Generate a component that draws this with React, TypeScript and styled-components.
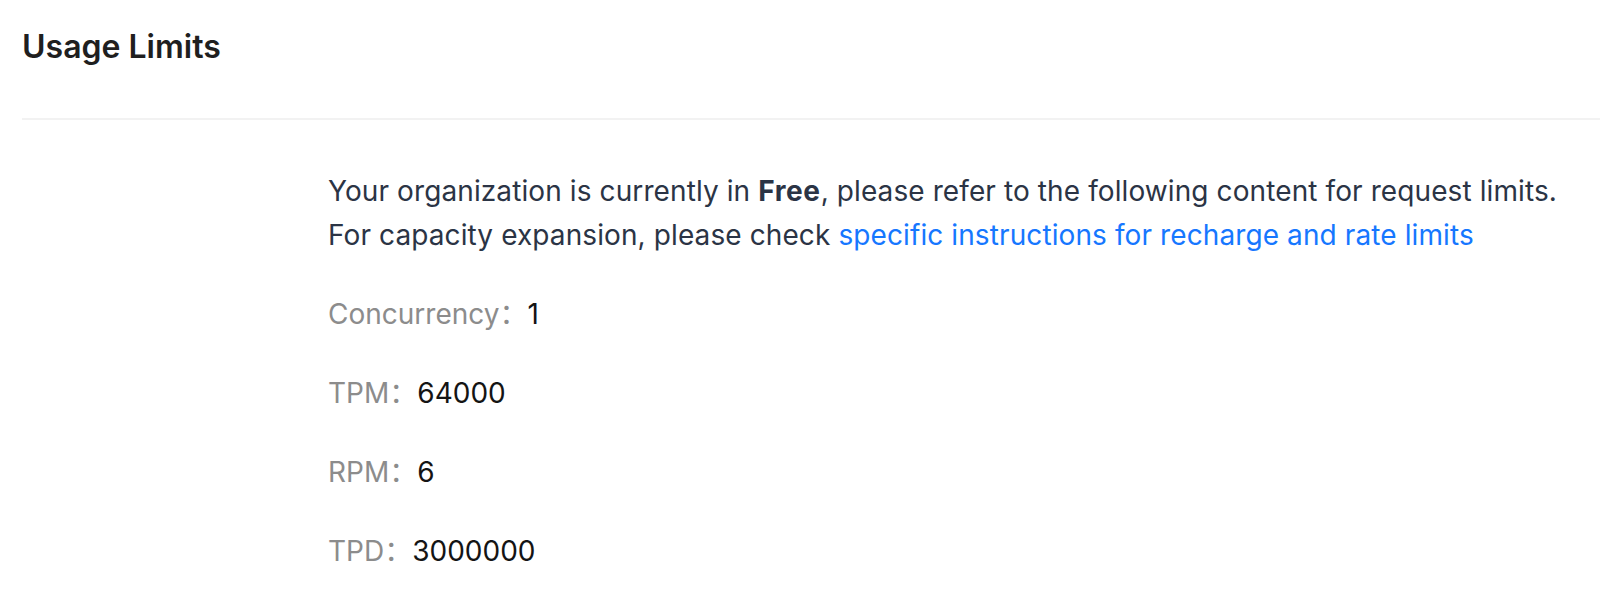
import React from 'react';
import styled, { createGlobalStyle } from 'styled-components';

const GlobalStyle = createGlobalStyle`
  html, body {
    margin: 0;
    padding: 0;
    background: #ffffff;
  }
  body {
    font-family: Inter, "Noto Sans", "Noto Sans CJK SC", sans-serif;
    -webkit-font-smoothing: antialiased;
  }
`;

const limits = [
  { label: 'Concurrency', value: '1' },
  { label: 'TPM', value: '64000' },
  { label: 'RPM', value: '6' },
  { label: 'TPD', value: '3000000' },
];

const App = () => (
  <>
    <GlobalStyle />
    <Page>
      <Header>
        <Title>Usage Limits</Title>
      </Header>
      <Body>
        <Intro>
          Your organization is currently in <strong>Free</strong>, please refer to the following content for request limits.
          <br />
          For capacity expansion, please check{' '}
          <Link href="#">specific instructions for recharge and rate limits</Link>
        </Intro>
        <LimitList>
          {limits.map((l) => (
            <LimitRow key={l.label}>
              <LimitLabel>{l.label}：</LimitLabel>
              <LimitValue>{l.value}</LimitValue>
            </LimitRow>
          ))}
        </LimitList>
      </Body>
    </Page>
  </>
);

export default App;

// ── Styled Components ──

const Page = styled.div`
  padding-left: 22px;
  min-height: 603px;
  box-sizing: border-box;
`;

const Header = styled.div`
  padding: 26px 0 50px;
  border-bottom: 2px solid #f2f2f2;
`;

const Title = styled.h2`
  margin: 0;
  font-size: 32px;
  line-height: 42px;
  font-weight: 600;
  color: #1f1f1f;
`;

const Body = styled.div`
  padding: 49px 0 0 306px;
`;

const Intro = styled.p`
  margin: 0;
  font-size: 28px;
  line-height: 44px;
  letter-spacing: 0.1px;
  color: #2b3445;

  strong {
    font-weight: 700;
    letter-spacing: 0.6px;
  }
`;

const Link = styled.a`
  color: #1677ff;
  text-decoration: none;
`;

const LimitList = styled.div`
  display: flex;
  flex-direction: column;
  gap: 37px;
  margin-top: 36px;
`;

const LimitRow = styled.div`
  display: flex;
  align-items: baseline;
  font-size: 28px;
  line-height: 42px;
`;

const LimitLabel = styled.span`
  color: #8c8c8c;
  font-family: Inter, "Noto Sans CJK SC", sans-serif;
`;

const LimitValue = styled.span`
  color: #141414;
`;
